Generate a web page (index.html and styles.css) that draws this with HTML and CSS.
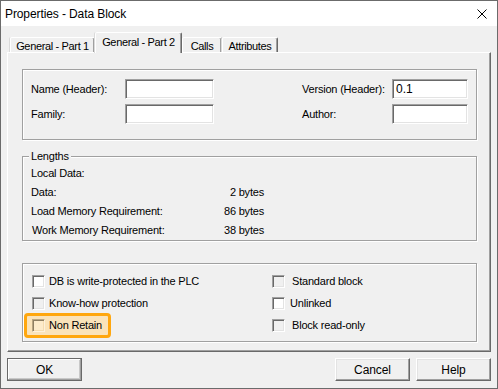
FILE: index.html
```html
<!DOCTYPE html>
<html lang="en">
<head>
    <meta charset="UTF-8">
    <title>Properties - Data Block</title>
    <link rel="stylesheet" href="styles.css">
</head>
<body>
    <div class="window">
        <!-- Title bar -->
        <div class="titlebar">
            <span class="title">Properties - Data Block</span>
            <svg class="close" width="10" height="10" viewBox="0 0 10 10">
                <path d="M0.5 0.5 L9.5 9.5 M9.5 0.5 L0.5 9.5" stroke="#000" stroke-width="1" fill="none"/>
            </svg>
        </div>

        <div class="content">
            <!-- Tabs -->
            <div class="tabs">
                <div class="tab tab-part1">General - Part 1</div>
                <div class="tab tab-active">General - Part 2</div>
                <div class="tab tab-calls">Calls</div>
                <div class="tab tab-attr">Attributes</div>
            </div>

            <div class="panel">
                <!-- Header fields -->
                <div class="group group-header">
                    <span class="label">Name (Header):</span>
                    <div class="input"></div>
                    <span></span>
                    <span class="label">Version (Header):</span>
                    <div class="input">0.1</div>

                    <span class="label">Family:</span>
                    <div class="input"></div>
                    <span></span>
                    <span class="label">Author:</span>
                    <div class="input"></div>
                </div>

                <!-- Lengths -->
                <div class="group group-lengths">
                    <div class="group-title">Lengths</div>
                    <div class="lengths">
                        <span>Local Data:</span><span class="value"></span>
                        <span>Data:</span><span class="value">2 bytes</span>
                        <span>Load Memory Requirement:</span><span class="value">86 bytes</span>
                        <span class="indent">Work Memory Requirement:</span><span class="value">38 bytes</span>
                    </div>
                </div>

                <!-- Options -->
                <div class="group group-options">
                    <div class="check-row"><span class="check"></span>DB is write-protected in the PLC</div>
                    <div class="check-row right"><span class="check disabled"></span>Standard block</div>
                    <div class="check-row"><span class="check disabled"></span>Know-how protection</div>
                    <div class="check-row right narrow"><span class="check"></span>Unlinked</div>
                    <div class="check-row highlight"><span class="check"></span>Non Retain</div>
                    <div class="check-row right"><span class="check disabled"></span>Block read-only</div>
                </div>
            </div>

            <!-- Buttons -->
            <div class="buttons">
                <div class="button default">OK</div>
                <div class="spacer"></div>
                <div class="button">Cancel</div>
                <div class="button">Help</div>
            </div>
        </div>
    </div>
</body>
</html>
```

FILE: styles.css
```css
body {
    margin: 0;
    font-family: 'Liberation Sans', Arial, sans-serif;
    font-size: 11px;
    letter-spacing: -0.2px;
    color: #000;
    background-color: #f0f0f0;
}

.window {
    width: 498px;
    height: 389px;
    box-sizing: border-box;
    border: 1px solid #6b6b6b;
    background-color: #f0f0f0;
}

.titlebar {
    height: 25px;
    background-color: #fff;
    display: flex;
    align-items: center;
    justify-content: space-between;
    padding: 0 10px 0 4px;
}

.title {
    font-size: 12px;
    letter-spacing: -0.1px;
}

.close {
    display: block;
    margin-top: 1px;
}

.content {
    padding: 0 6px;
}

/* Tabs */
.tabs {
    height: 26px;
    display: flex;
    align-items: flex-end;
    padding-left: 3px;
}

.tab {
    height: 15px;
    box-sizing: border-box;
    display: flex;
    align-items: center;
    justify-content: center;
    border-top: 1px solid #fff;
    border-left: 1px solid #fff;
    border-right: 1px solid #696969;
    box-shadow: inset -1px 0 0 #a0a0a0, -1px 0 0 #dadada;
    border-radius: 2px 2px 0 0;
    letter-spacing: -0.35px;
    padding-top: 1px;
}

.tab-part1 { width: 85px; }
.tab-calls { width: 40px; }
.tab-attr  { width: 56px; }

.tab-active {
    width: 87px;
    height: 21px;
    margin-bottom: -1px;
    position: relative;
    z-index: 1;
    background-color: #f0f0f0;
    padding-top: 0;
    padding-bottom: 2px;
}

/* Panel */
.panel {
    width: 484px;
    height: 300px;
    box-sizing: border-box;
    border-top: 1px solid #fff;
    border-left: 1px solid #fff;
    border-right: 1px solid #696969;
    border-bottom: 1px solid #696969;
    box-shadow: inset -1px -1px 0 #a0a0a0;
    padding: 16px 13px 0 14px;
}

.group {
    border: 1px solid #a0a0a0;
    box-shadow: inset 1px 1px 0 #fff, 1px 1px 0 #fff;
}

.group-header {
    display: grid;
    grid-template-columns: 94px 89px 1fr 90px 76px;
    grid-auto-rows: 20px;
    row-gap: 5px;
    align-items: center;
    padding: 9px 8px 15px 8px;
}

.input {
    height: 20px;
    box-sizing: border-box;
    background-color: #fff;
    border-top: 1px solid #a0a0a0;
    border-left: 1px solid #a0a0a0;
    border-right: 1px solid #fff;
    border-bottom: 1px solid #fff;
    box-shadow: inset 1px 1px 0 #696969, inset -1px -1px 0 #e3e3e3;
    font-size: 12px;
    letter-spacing: 0;
    line-height: 18px;
    padding-left: 3px;
}

.group-lengths {
    margin-top: 16px;
    padding-bottom: 1px;
}

.group-title {
    display: table;
    margin: -7px 0 0 6px;
    padding: 0 2px;
    line-height: 13px;
    background-color: #f0f0f0;
}

.lengths {
    display: grid;
    grid-template-columns: 160px 73px;
    grid-auto-rows: 19px;
    align-items: center;
    padding-left: 8px;
}

.lengths .value {
    justify-self: end;
}

.lengths .indent {
    padding-left: 1px;
}

/* Options */
.group-options {
    margin-top: 22px;
    display: grid;
    grid-template-columns: 240px 1fr;
    grid-auto-rows: 22px;
    align-items: center;
    padding: 6px 0 5px 9px;
}

.check-row {
    display: flex;
    align-items: center;
    gap: 4px;
}

.check-row.right {
    gap: 7px;
}

.check-row.narrow {
    gap: 5px;
}

.check {
    width: 13px;
    height: 13px;
    box-sizing: border-box;
    flex: none;
    background-color: #fff;
    border-top: 1px solid #a0a0a0;
    border-left: 1px solid #a0a0a0;
    border-right: 1px solid #fff;
    border-bottom: 1px solid #fff;
    box-shadow: inset 1px 1px 0 #696969, inset -1px -1px 0 #e3e3e3;
}

.check.disabled {
    background-color: #f0f0f0;
}

.check-row.highlight {
    justify-self: start;
    height: 25px;
    box-sizing: border-box;
    margin-left: -8px;
    padding: 0 6px 0 5px;
    border: 3px solid #ffa70f;
    border-radius: 4px;
    background-color: #fae3ba;
}

.highlight .check {
    background-color: #fdebcb;
    border-top-color: #b9a582;
    border-left-color: #b9a582;
    border-right-color: #fdf1dc;
    border-bottom-color: #fdf1dc;
    box-shadow: inset 1px 1px 0 #8f7f63, inset -1px -1px 0 #f5dcb0;
}

/* Buttons */
.buttons {
    display: flex;
    gap: 6px;
    margin-top: 6px;
}

.spacer {
    flex: 1;
}

.button {
    width: 75px;
    height: 23px;
    box-sizing: border-box;
    display: flex;
    align-items: center;
    justify-content: center;
    border-top: 1px solid #fff;
    border-left: 1px solid #fff;
    border-right: 1px solid #696969;
    border-bottom: 1px solid #696969;
    box-shadow: inset -1px -1px 0 #a0a0a0, inset 1px 1px 0 #e3e3e3;
    font-size: 12px;
    letter-spacing: -0.1px;
}

.button.default {
    border: 1px solid #696969;
    box-shadow: inset -1px -1px 0 #a0a0a0, inset 1px 1px 0 #fff, inset -2px -2px 0 #c8c8c8;
}
```
